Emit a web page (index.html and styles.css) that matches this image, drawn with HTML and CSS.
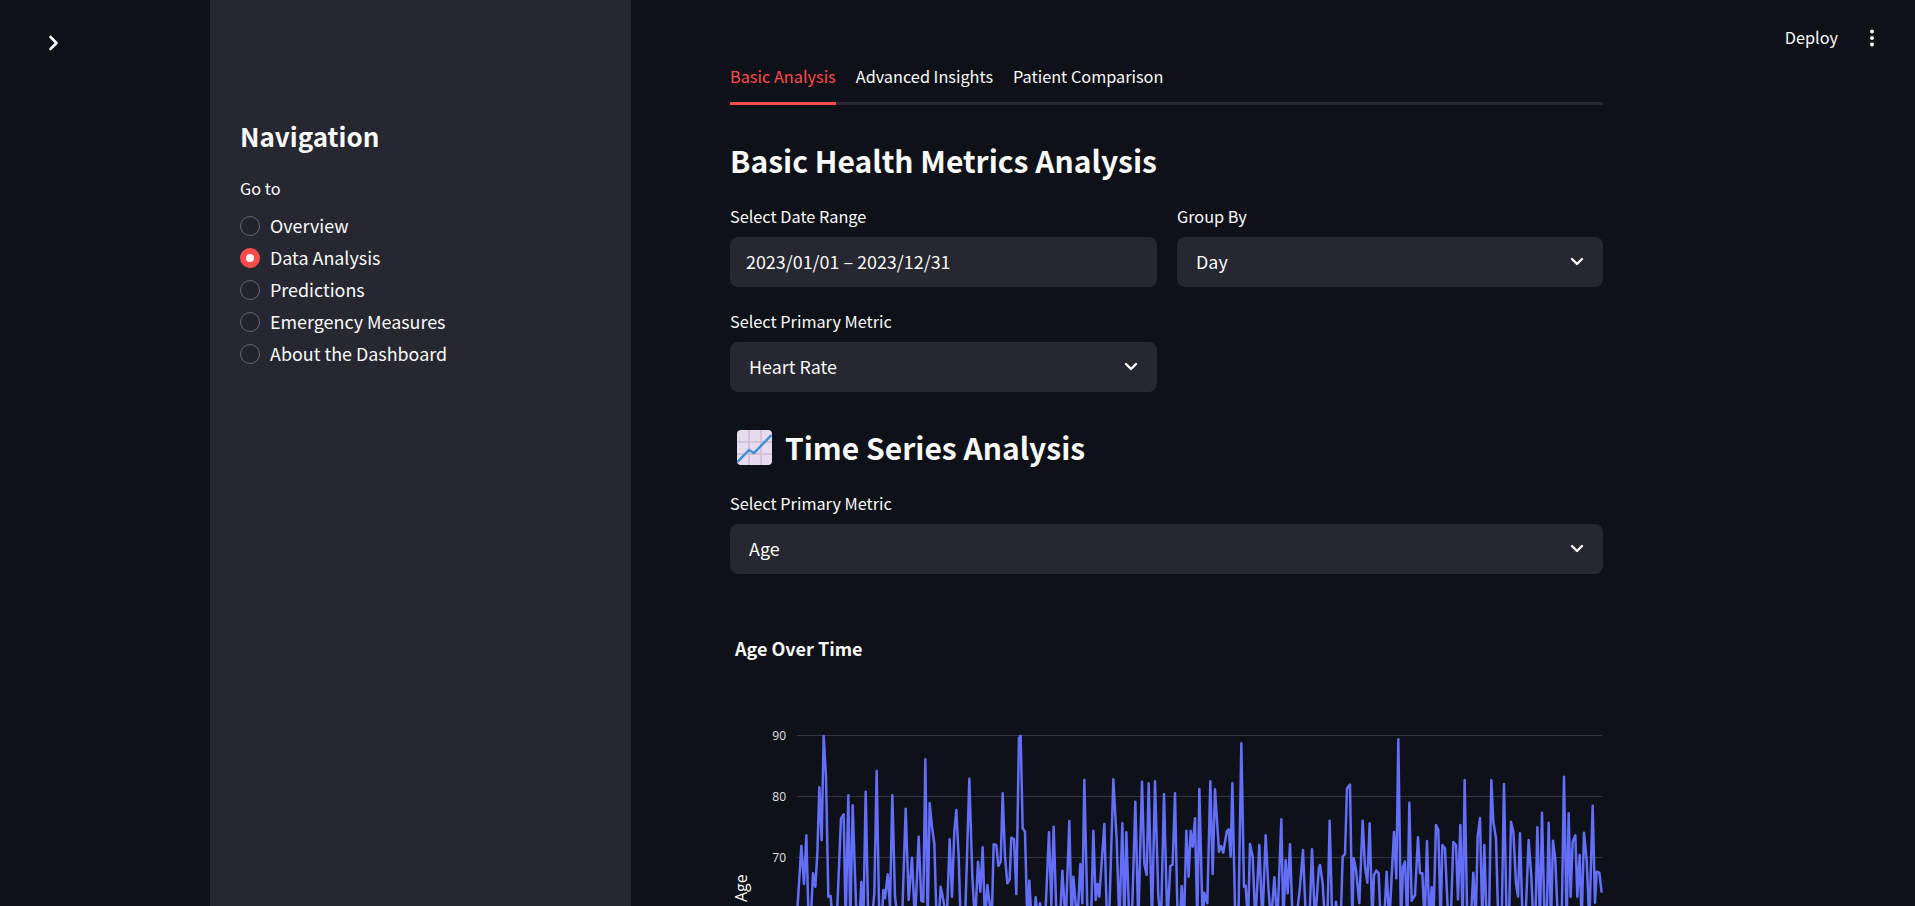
FILE: index.html
```html
<!DOCTYPE html>
<html lang="en">
<head>
    <meta charset="UTF-8">
    <title>Health Dashboard</title>
    <link rel="stylesheet" href="styles.css">
</head>
<body>
    <div class="rail">
        <svg class="rail-icon" width="12" height="16" viewBox="0 0 12 16"><path d="M2.5 2 L8.5 8 L2.5 14" fill="none" stroke="#fafafa" stroke-width="2.6" stroke-linecap="round" stroke-linejoin="round"/></svg>
    </div>

    <aside class="sidebar">
        <h2 class="nav-title">Navigation</h2>
        <div class="nav-label">Go to</div>
        <div class="radio-row"><span class="radio"></span>Overview</div>
        <div class="radio-row"><span class="radio radio-on"></span>Data Analysis</div>
        <div class="radio-row"><span class="radio"></span>Predictions</div>
        <div class="radio-row"><span class="radio"></span>Emergency Measures</div>
        <div class="radio-row"><span class="radio"></span>About the Dashboard</div>
    </aside>

    <main class="main">
        <div class="topbar">
            <span>Deploy</span>
            <svg width="6" height="18" viewBox="0 0 6 18"><circle cx="3" cy="2.5" r="2"/><circle cx="3" cy="9" r="2"/><circle cx="3" cy="15.5" r="2"/></svg>
        </div>

        <div class="content">
            <div class="tabs">
                <div class="tab tab-active">Basic Analysis</div>
                <div class="tab">Advanced Insights</div>
                <div class="tab">Patient Comparison</div>
            </div>

            <h1 class="heading">Basic Health Metrics Analysis</h1>

            <div class="two-col">
                <div>
                    <div class="field-label">Select Date Range</div>
                    <div class="field field-date">2023/01/01 – 2023/12/31</div>
                </div>
                <div>
                    <div class="field-label">Group By</div>
                    <div class="field">Day
                        <svg class="caret" width="14" height="10" viewBox="0 0 14 10"><path d="M2 2 L7 7 L12 2" fill="none" stroke="#fafafa" stroke-width="2.4" stroke-linecap="round" stroke-linejoin="round"/></svg>
                    </div>
                </div>
                <div class="row-gap">
                    <div class="field-label">Select Primary Metric</div>
                    <div class="field">Heart Rate
                        <svg class="caret" width="14" height="10" viewBox="0 0 14 10"><path d="M2 2 L7 7 L12 2" fill="none" stroke="#fafafa" stroke-width="2.4" stroke-linecap="round" stroke-linejoin="round"/></svg>
                    </div>
                </div>
            </div>

            <h2 class="heading heading-icon">
                <svg width="35" height="35" viewBox="0 0 35 35">
                    <rect width="35" height="35" rx="4" fill="#e6dcee"/>
                    <path d="M0 12H35M0 24H35M12 0V35M24 0V35" stroke="#c6bad2" stroke-width="1.4"/>
                    <path d="M0.5 32 L12 20 L17 23 L34.5 5" fill="none" stroke="#3f8fd4" stroke-width="2.4"/>
                </svg>
                Time Series Analysis
            </h2>

            <div class="field-label">Select Primary Metric</div>
            <div class="field">Age
                <svg class="caret" width="14" height="10" viewBox="0 0 14 10"><path d="M2 2 L7 7 L12 2" fill="none" stroke="#fafafa" stroke-width="2.4" stroke-linecap="round" stroke-linejoin="round"/></svg>
            </div>

            <svg class="chart" width="873" height="450">
                <text class="chart-title" x="5" y="46">Age Over Time</text>
                <line class="grid" x1="67" x2="872" y1="125.5" y2="125.5"/>
                <line class="grid" x1="67" x2="872" y1="186.5" y2="186.5"/>
                <line class="grid" x1="67" x2="872" y1="247.5" y2="247.5"/>
                <text class="tick" x="56" y="130">90</text>
                <text class="tick" x="56" y="191">80</text>
                <text class="tick" x="56" y="252">70</text>
                <text class="axis-title" transform="translate(17 292) rotate(-90)">Age</text>
                <!-- traced from the plot, 3 units per pixel -->
                <g transform="translate(-10 100) scale(0.33333)">
                    <polyline class="trace" points="232,600 244,408 252,522 259,376 266,640 272,640 279,490 286,530 292,430 298,232 305,390 311,78 318,200 325,560 332,558 338,640 350,640 363,325 371,313 377,640 385,256 391,640 398,286 410,640 418,640 424,516 430,640 437,245 445,640 455,640 463,550 470,183 478,640 485,640 490,540 495,565 503,493 510,590 517,256 525,560 535,640 546,640 557,296 566,570 576,443 585,640 596,380 604,572 610,575 616,148 623,640 629,279 636,350 643,402 650,640 656,640 662,530 670,570 680,640 689,388 696,560 703,365 709,300 716,440 722,640 735,640 748,206 757,500 765,640 774,455 781,545 788,412 795,640 802,525 810,590 815,640 821,403 829,405 835,468 842,455 848,250 855,440 862,520 869,508 874,383 882,387 889,552 897,80"/>
                    <polyline class="trace" transform="translate(900 0)" points="-3,80 2,78 8,355 15,365 22,640 28,512 35,640 42,640 47,562 54,640 60,580 66,640 75,640 87,367 94,585 101,350 110,640 120,640 127,482 137,640 148,333 155,640 160,500 172,640 181,462 187,580 193,210 203,640 213,640 220,362 227,570 233,522 238,560 253,342 261,640 267,640 280,208 290,390 298,640 307,340 313,640 319,367 328,640 337,585 346,275 355,640 366,215 373,462 380,495 386,220 396,640 405,214 415,560 423,640 432,253 442,640 451,468 458,464 465,250 473,640 480,640 485,528 492,640 499,362 506,500 512,362 518,410 525,325 532,640 538,237 548,640 553,548 562,580 571,214 578,492 585,238 597,425 603,408 610,428 620,365 626,358 632,440 637,220 646,640 655,640 664,100 672,530 677,527 684,640 690,402 698,440 706,640 718,405 727,640 737,376 745,530 753,640 763,502 772,640 784,328 790,640 797,450 803,550 810,403 818,640 828,640 840,530 849,420 858,640 868,640 876,418 885,640 897,470"/>
                    <polyline class="trace" transform="translate(1800 0)" points="-3,470 0,465 8,520 15,640 22,640 29,332 37,640 45,640 48,575 54,640 62,640 68,440 75,432 81,235 90,224 97,640 101,445 108,480 118,580 128,332 135,470 142,518 149,340 157,640 162,495 169,482 176,490 182,640 192,640 200,485 208,640 215,500 222,366 229,505 235,88 243,640 249,470 255,455 262,640 268,278 275,572 285,555 294,382 300,490 307,490 314,640 321,393 328,640 335,532 340,640 348,345 355,360 362,640 367,405 375,415 385,640 392,640 400,396 408,405 414,568 421,345 428,640 434,210 442,640 452,640 460,488 467,640 473,380 480,325 487,640 493,405 500,640 507,640 514,210 520,335 528,385 535,640 545,640 552,222 560,640 567,640 573,335 580,365 588,520 594,560 600,370 608,640 616,640 626,390 634,500 640,640 646,640 652,352 660,640 666,308 674,640 680,640 686,338 693,640 699,392 706,450 714,640 725,640 732,200 740,640 746,310 752,560 758,395 766,376 772,560 779,435 785,640 792,368 800,450 808,640 818,287 825,578 830,485 838,488 845,548"/>
                </g>
            </svg>
        </div>
    </main>
</body>
</html>
```

FILE: styles.css
```css
* {
    box-sizing: border-box;
}

html, body {
    height: 100%;
}

body {
    margin: 0;
    display: flex;
    overflow: hidden;
    font-family: "Noto Sans CJK JP", "Noto Sans", sans-serif;
    background-color: #0e1117;
    color: #fafafa;
}

/* Left strip with the collapse arrow */
.rail {
    width: 210px;
    flex-shrink: 0;
    padding: 35px 0 0 48px;
}

.rail-icon {
    display: block;
}

.sidebar {
    width: 421px;
    flex-shrink: 0;
    padding: 114px 30px 0 30px;
    background-color: #262730;
}

.nav-title {
    margin: 0;
    font-size: 26px;
    font-weight: 600;
    line-height: 44px;
}

.nav-label {
    margin: 20px 0 11px;
    font-size: 16.3px;
    line-height: 20px;
}

.radio-row {
    display: flex;
    align-items: center;
    gap: 10px;
    height: 32px;
    font-size: 17.9px;
}

.radio {
    width: 20px;
    height: 20px;
    margin-top: 2px;
    border: 1px solid #686a72;
    border-radius: 50%;
    background-color: #22232b;
}

.radio-on {
    border: 6px solid #ff4b4b;
    background-color: #fafafa;
}

.main {
    position: relative;
    flex: 1;
    overflow: hidden;
}

.topbar {
    position: absolute;
    top: 27px;
    right: 40px;
    display: flex;
    align-items: center;
    gap: 31px;
    font-size: 16.3px;
    line-height: 20px;
}

.topbar svg {
    margin-top: 2px;
    fill: #fafafa;
}

.content {
    width: 873px;
    margin-left: 99px;
    padding-top: 59px;
}

.tabs {
    display: flex;
    gap: 20px;
    box-shadow: inset 0 -3px 0 #262730;
}

.tab {
    height: 46px;
    font-size: 16.3px;
    line-height: 35px;
}

.tab-active {
    color: #ff4b4b;
    border-bottom: 3px solid #ff4b4b;
}

.heading {
    margin: 33px 0 25px;
    font-size: 30px;
    font-weight: 600;
    line-height: 44px;
}

.heading-icon {
    display: flex;
    align-items: center;
    gap: 13px;
    margin: 33px 0 25px;
    padding-left: 7px;
}

.two-col {
    display: grid;
    grid-template-columns: 427px 426px;
    column-gap: 20px;
}

.row-gap {
    margin-top: 25px;
}

.field-label {
    margin-bottom: 12px;
    font-size: 16.3px;
    line-height: 18px;
}

.field {
    display: flex;
    align-items: center;
    justify-content: space-between;
    height: 50px;
    padding: 0 19px 2px;
    border-radius: 8px;
    background-color: #262730;
    font-size: 17.9px;
}

.field-date {
    padding: 0 16px 2px;
}

.caret {
    margin-top: 2px;
}

.chart {
    display: block;
    margin-top: 36px;
}

.chart-title {
    font-size: 18px;
    font-weight: 700;
    fill: #fafafa;
}

.grid {
    stroke: #34363d;
    stroke-width: 1;
}

.tick {
    font-family: "Open Sans", sans-serif;
    font-size: 12px;
    text-anchor: end;
    fill: #e2e2e4;
}

.axis-title {
    font-family: "Open Sans", sans-serif;
    font-size: 16px;
    fill: #fafafa;
}

.trace {
    fill: none;
    stroke: #636efa;
    stroke-width: 7.5;
    stroke-linejoin: round;
}
```
